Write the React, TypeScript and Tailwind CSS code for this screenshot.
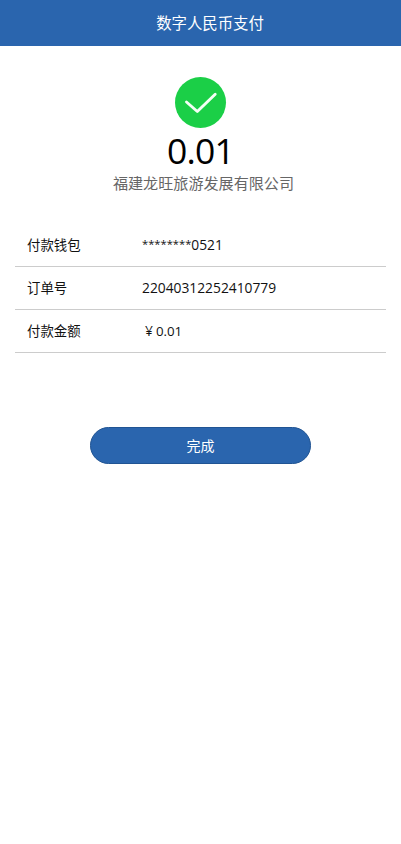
import type { ReactNode } from "react";

type DetailRowProps = {
  label: string;
  children: ReactNode;
};

function SuccessIcon() {
  return (
    <svg viewBox="0 0 52 52" className="h-[52px] w-[52px]" fill="none" aria-hidden="true">
      <circle cx="25.5" cy="25.5" r="25.5" fill="#1bcf47" />
      <path
        d="M11.5 25 22.3 34.5 40.2 17.2"
        stroke="#f4fff5"
        strokeWidth="2.9"
        strokeLinecap="round"
        strokeLinejoin="round"
      />
    </svg>
  );
}

function DetailRow({ label, children }: DetailRowProps) {
  return (
    <div className="flex h-[43px] items-center border-b border-[#cccccc] pl-3 text-[#111111]">
      <dt className="w-[115px] text-[13.4px] leading-5">{label}</dt>
      <dd className="text-[13.8px] leading-5">{children}</dd>
    </div>
  );
}

export default function App() {
  return (
    <div className="min-h-screen bg-white font-['Open_Sans','Noto_Sans_CJK_SC',sans-serif]">
      <header className="flex h-[46px] items-center justify-center bg-[#2a65ae] pt-[2px] pl-[19px]">
        <h1 className="text-[15.4px] leading-none text-white">数字人民币支付</h1>
      </header>

      <main>
        <section className="flex flex-col items-center pt-[31px]">
          <SuccessIcon />
          <p className="h-[42px] text-[35.5px] leading-[43px] tracking-[-0.8px] text-black">
            0.01
          </p>
          <p className="ml-[6px] text-[15.1px] leading-[24px] text-[#666666]">
            福建龙旺旅游发展有限公司
          </p>
        </section>

        <dl className="mx-[15px] mt-[29px]">
          <DetailRow label="付款钱包">
            <span className="align-[2px] text-[11.2px] leading-none">********</span>0521
          </DetailRow>
          <DetailRow label="订单号">22040312252410779</DetailRow>
          <DetailRow label="付款金额">
            <span className="mr-[3px] ml-[3px]">¥</span>
            <span className="text-[13.3px]">0.01</span>
          </DetailRow>
        </dl>

        <div className="mt-[74px] flex justify-center">
          <button
            type="button"
            className="h-[37px] w-[221px] rounded-full border border-[#205493] bg-[#2a65ae] text-[14px] leading-none text-white"
          >
            完成
          </button>
        </div>
      </main>
    </div>
  );
}
